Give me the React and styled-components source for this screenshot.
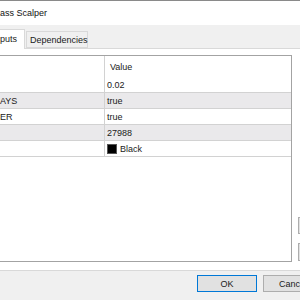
import React from "react";
import styled, { createGlobalStyle } from "styled-components";

const Global = createGlobalStyle`
  html, body { margin: 0; padding: 0; }
  body { width: 300px; height: 300px; overflow: hidden; background: #f0f0f0;
    font-family: "Liberation Sans", Arial, sans-serif; font-size: 9px; color: #1a1a1a; }
`;

const Window = styled.div`
  width: 300px;
  height: 300px;
  display: flex;
  flex-direction: column;
  overflow: hidden;
`;

const TitleBar = styled.div`
  height: 24px;
  flex: none;
  border-top: 1px solid #8a8a8a;
  background: #ffffff;
  display: flex;
  align-items: center;
  font-size: 9px;
  color: #111;
  white-space: nowrap;
`;

const Body = styled.div`
  flex: 1;
  display: flex;
  flex-direction: column;
  background: #f0f0f0;
  min-height: 0;
`;

const TabStrip = styled.div`
  height: 23px;
  flex: none;
  display: flex;
  align-items: flex-end;
  gap: 1px;
  position: relative;
  z-index: 1;
`;

const Tab = styled.div`
  box-sizing: border-box;
  height: ${(p) => (p.$active ? 20 : 17)}px;
  width: ${(p) => p.$w}px;
  margin-bottom: ${(p) => (p.$active ? -1 : 0)}px;
  background: ${(p) => (p.$active ? "#ffffff" : "#f0f0f0")};
  border: 1px solid #d9d9d9;
  border-bottom: ${(p) => (p.$active ? "none" : "1px solid #d9d9d9")};
  border-left: ${(p) => (p.$active ? "none" : "1px solid #d9d9d9")};
  display: flex;
  align-items: center;
  padding-left: ${(p) => (p.$active ? 0 : 3)}px;
  padding-bottom: ${(p) => (p.$active ? 2 : 0)}px;
  white-space: nowrap;
  font-size: 9px;
`;

const TabPage = styled.div`
  flex: none;
  height: 223px;
  box-sizing: border-box;
  background: #ffffff;
  border-top: 1px solid #d9d9d9;
  border-bottom: 1px solid #d9d9d9;
  padding: 6px 0 8px 0;
  display: flex;
  gap: 6px;
`;

const Grid = styled.div`
  width: 292px;
  flex: none;
  box-sizing: border-box;
  border: 1px solid #a3a3a3;
  border-left: none;
  background: #ffffff;
  display: flex;
  flex-direction: column;
`;

const Row = styled.div`
  display: grid;
  grid-template-columns: 105px 1fr;
  height: ${(p) => (p.$header ? 21 : 16)}px;
  box-sizing: border-box;
  background: ${(p) => (p.$shade ? "#eae9eb" : "#ffffff")};
  border-bottom: ${(p) => (p.$header ? "none" : "1px solid #d2d2d2")};
`;

const Cell = styled.div`
  display: flex;
  align-items: center;
  padding-left: ${(p) => p.$pad || 0}px;
  border-right: ${(p) => (p.$sep ? "1px solid #d2d2d2" : "none")};
  white-space: nowrap;
  overflow: hidden;
  font-size: 9px;
`;

const Swatch = styled.span`
  display: inline-block;
  width: 8px;
  height: 8px;
  background: #000;
  border: 1px solid #555;
  margin-right: 3px;
`;

const SideButtons = styled.div`
  display: flex;
  flex-direction: column;
  justify-content: flex-end;
  gap: 9px;
  padding-bottom: 1px;
`;

const Button = styled.div`
  box-sizing: border-box;
  width: ${(p) => p.$w || 60}px;
  height: ${(p) => p.$h || 17}px;
  flex: none;
  background: #e1e1e1;
  border: 1px solid ${(p) => (p.$primary ? "#0078d7" : "#adadad")};
  box-shadow: ${(p) => (p.$primary ? "inset 0 0 0 1px #e1e1e1" : "none")};
  display: flex;
  align-items: center;
  justify-content: center;
  font-size: 9px;
  white-space: nowrap;
  overflow: hidden;
`;

const ButtonBar = styled.div`
  flex: 1;
  display: flex;
  gap: 6px;
  padding: 4px 0 0 197px;
  background: #f0f0f0;
`;

const rows = [
  { name: "", value: "0.02" },
  { name: "AYS", value: "true", shade: true },
  { name: "ER", value: "true" },
  { name: "", value: "27988", shade: true },
  { name: "", value: "Black", color: true },
];

export default function App() {
  return (
    <>
      <Global />
      <Window>
        <TitleBar>ass Scalper</TitleBar>
        <Body>
          <TabStrip>
            <Tab $active $w={25}>puts</Tab>
            <Tab $w={62}>Dependencies</Tab>
          </TabStrip>
          <TabPage>
            <Grid>
              <Row $header>
                <Cell $sep />
                <Cell $pad={5}>Value</Cell>
              </Row>
              {rows.map((r, i) => (
                <Row key={i} $shade={r.shade}>
                  <Cell $sep>{r.name}</Cell>
                  <Cell $pad={2}>
                    {r.color && <Swatch />}
                    {r.value}
                  </Cell>
                </Row>
              ))}
            </Grid>
            <SideButtons>
              <Button $w={70} $h={17} />
              <Button $w={70} $h={18} />
            </SideButtons>
          </TabPage>
          <ButtonBar>
            <Button $primary>OK</Button>
            <Button>Cancel</Button>
          </ButtonBar>
        </Body>
      </Window>
    </>
  );
}
